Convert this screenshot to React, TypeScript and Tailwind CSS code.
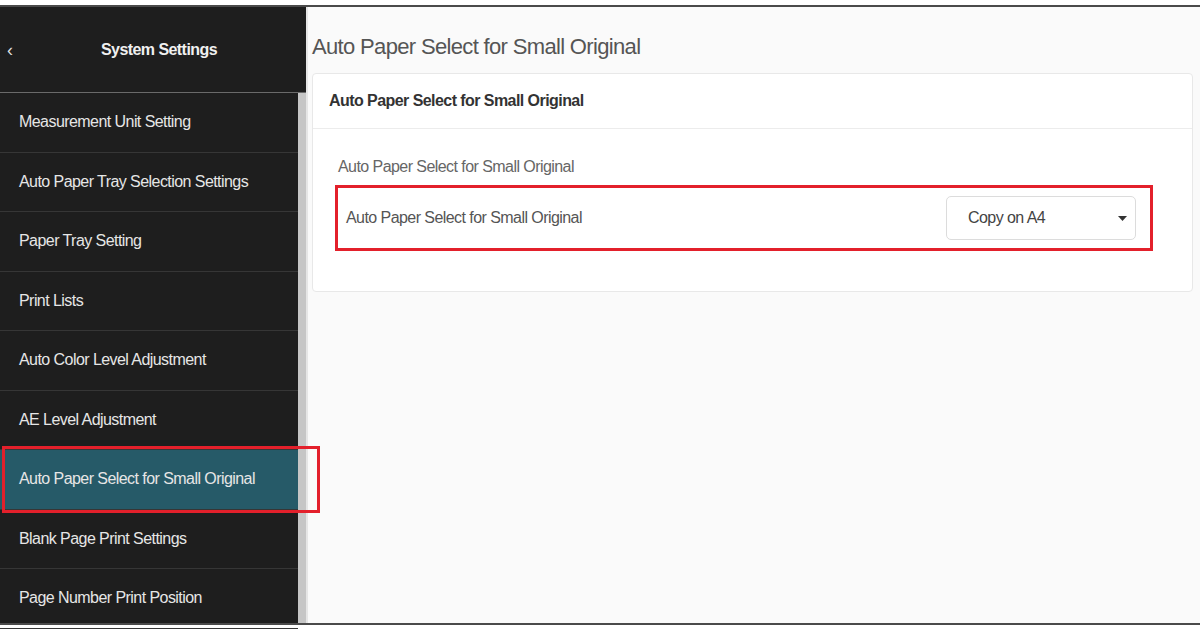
const items = [
  "Measurement Unit Setting",
  "Auto Paper Tray Selection Settings",
  "Paper Tray Setting",
  "Print Lists",
  "Auto Color Level Adjustment",
  "AE Level Adjustment",
  "Auto Paper Select for Small Original",
  "Blank Page Print Settings",
  "Page Number Print Position",
];

const font = { fontFamily: '"Liberation Sans", Arial, sans-serif' };

export default function App() {
  return (
    <div className="h-[629px] w-[1200px] overflow-hidden bg-white pt-[5px]" style={font}>
      <div className="flex h-[620px] border-y-2 border-[#4a4a4a]">
        {/* sidebar */}
        <aside className="relative z-10 flex w-[306px] flex-col bg-[#1e1e1e]">
          <div className="flex h-[86px] shrink-0 items-center border-b border-[#6a6a6a]">
            <span className="w-[30px] pl-[7px] text-[18px] leading-none text-[#ddd]">
              ‹
            </span>
            <p className="flex-1 pr-[18px] text-center text-[16px] font-bold tracking-[-0.035em] text-[#f0f0f0]">
              System Settings
            </p>
          </div>

          <div className="flex min-h-0 flex-1">
            <ul className="w-[298px]">
              {items.map((item, i) => {
                const active = i === 6;
                return (
                  <li
                    key={item}
                    className={`relative flex h-[59.5px] items-center border-b border-[#363636] pl-[19px] text-[16px] tracking-[-0.035em] text-[#e6e6e6] ${
                      active ? "bg-[#265a68]" : ""
                    }`}
                  >
                    {item}
                    {active && (
                      <span className="pointer-events-none absolute -top-[4px] -bottom-[4px] left-[2px] w-[318px] border-[3px] border-[#e3202b]" />
                    )}
                  </li>
                );
              })}
            </ul>
            <div className="w-[8px] bg-[#c6c6c6]" />
          </div>
        </aside>

        {/* main */}
        <main className="flex-1 border-l-2 border-[#e6e6e6] bg-[#fafafa] pl-[4px] pr-[7px]">
          <h1 className="flex h-[66px] items-center pt-[12px] text-[22px] tracking-[-0.03em] text-[#555]">
            Auto Paper Select for Small Original
          </h1>

          <div className="rounded-[4px] border border-[#e8e8e8] bg-white">
            <div className="flex h-[55px] items-center border-b border-[#ececec] pl-[16px] text-[16px] font-bold tracking-[-0.035em] text-[#333]">
              Auto Paper Select for Small Original
            </div>

            <div className="pb-[40px] pl-[22px] pr-[39px] pt-[26px]">
              <p className="pl-[3px] text-[16px] tracking-[-0.035em] text-[#666]">
                Auto Paper Select for Small Original
              </p>
              <div className="mt-[6px] flex h-[66px] items-center justify-between border-[3px] border-[#e3202b] pl-[8px] pr-[14px]">
                <span className="text-[16px] tracking-[-0.035em] text-[#555]">
                  Auto Paper Select for Small Original
                </span>
                <div className="flex h-[44px] w-[190px] items-center justify-between rounded-[5px] border border-[#dcdcdc] bg-white pl-[21px] pr-[8px]">
                  <span className="text-[16px] tracking-[-0.035em] text-[#444]">Copy on A4</span>
                  <svg width="9" height="5" viewBox="0 0 9 5">
                    <path d="M0 0h9L4.5 5z" fill="#333" />
                  </svg>
                </div>
              </div>
            </div>
          </div>
        </main>
      </div>
    </div>
  );
}
